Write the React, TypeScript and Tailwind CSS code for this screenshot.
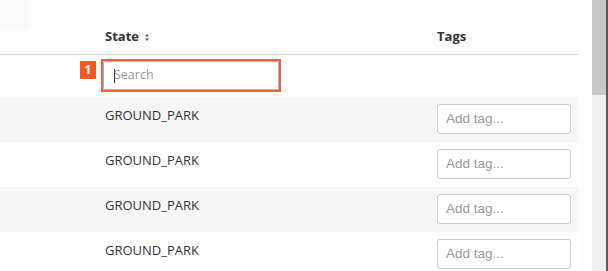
import React from "react";

const rows = [0, 1, 2, 3];

function SortIcon() {
  return (
    <svg width="6" height="9" viewBox="0 0 6 9" className="ml-[5px] inline-block">
      <path d="M3 1 L5 3.5 L1 3.5 Z" fill="#555" />
      <path d="M3 8 L5 5.5 L1 5.5 Z" fill="#555" />
    </svg>
  );
}

export default function App() {
  return (
    <div className="flex h-[271px] w-[608px] overflow-hidden bg-[#fdfdfd]" style={{ fontFamily: '"Open Sans", "Noto Sans", sans-serif' }}>
      <div className="relative flex-1">
        <div className="absolute left-0 top-0 h-[28px] w-[29px] bg-[#fafafa]" />
        <div className="w-[578px]">
          <div className="grid h-[55px] grid-cols-[105px_332px_141px] border-b border-[#d8d2d2]">
            <div />
            <div className="flex items-center pt-[20px] text-[13px] font-bold text-[#333]">
              State
              <SortIcon />
            </div>
            <div className="flex items-center pt-[20px] text-[13px] font-bold text-[#333]">Tags</div>
          </div>
          <div className="grid h-[42px] grid-cols-[105px_332px_141px]">
            <div />
            <div className="relative pt-[4px]">
              <div className="absolute left-[-25px] top-[6px] flex h-[18px] w-[16px] items-center justify-center bg-[#f15a24] text-[12px] font-bold text-white">
                1
              </div>
              <div className="ml-[-4px] h-[33px] w-[180px] border-2 border-[#f26130] bg-white">
                <div className="flex h-full w-full items-center border border-[#8fbce6] pl-[10px] text-[12.5px] text-[#999]">
                  <span className="mr-[1px] inline-block h-[14px] w-px bg-[#333]" />
                  <span className="ml-[-2px]">Search</span>
                </div>
              </div>
            </div>
            <div />
          </div>
          {rows.map((i) => (
            <div
              key={i}
              className={`grid h-[45px] grid-cols-[105px_332px_141px] ${i % 2 === 0 ? "bg-[#f7f7f7]" : "bg-[#ffffff]"}`}
            >
              <div />
              <div className="pt-[8px] text-[13px] leading-[20px] text-[#333]">GROUND_PARK</div>
              <div className="pt-[7px]">
                <div
                  className="flex h-[30px] w-[134px] items-center rounded-[3px] border border-[#cccccc] bg-white pl-[8px] text-[13.5px] text-[#999]"
                  style={{ fontFamily: '"Liberation Sans", Arial, sans-serif' }}
                >
                  Add tag...
                </div>
              </div>
            </div>
          ))}
        </div>
      </div>
      <div className="flex w-[16px] flex-col border-r-2 border-[#5a5a5a] bg-[#f0f0f0]">
        <div className="h-[95px] w-full bg-[#c8c8c8]" />
      </div>
    </div>
  );
}
